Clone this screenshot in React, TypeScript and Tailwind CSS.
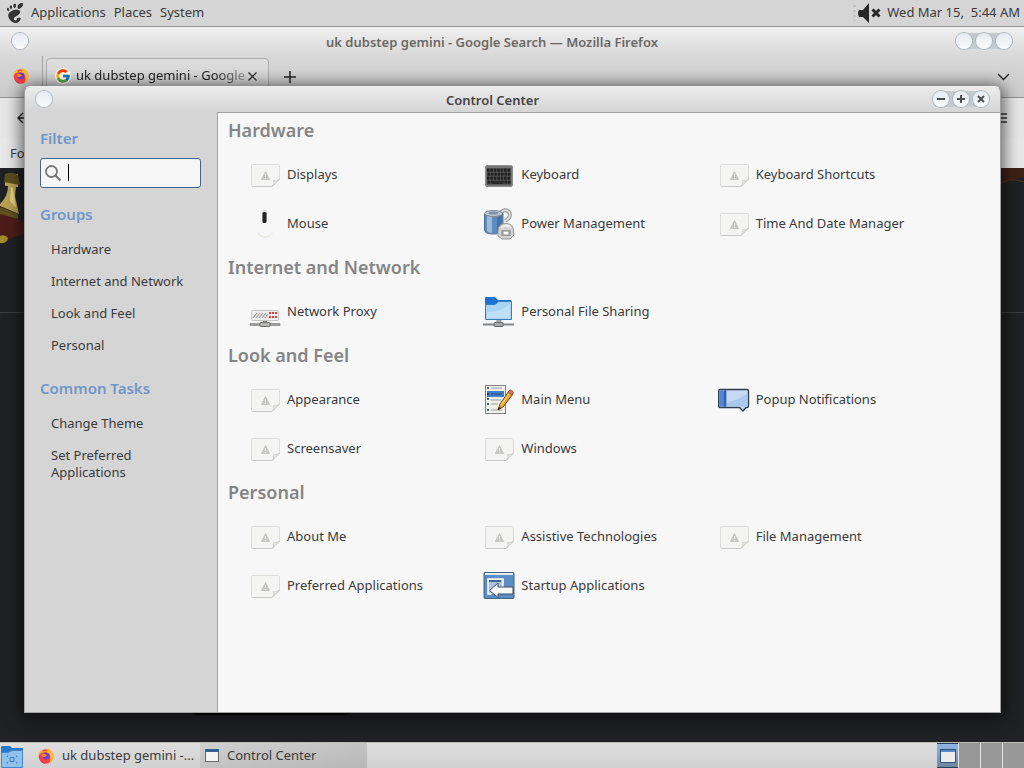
import type { ReactNode } from 'react';
import { FcGoogle } from 'react-icons/fc';
import { SiGnome } from 'react-icons/si';

function BlankIcon() {
  return (
    <svg width="32" height="32" viewBox="0 0 32 32">
      <path d="M3.5 5.5H29.5Q30.5 5.5 30.5 6.5V20L23 27.5H3.5Q2.5 27.5 2.5 26.5V6.5Q2.5 5.5 3.5 5.5Z" fill="#f4f4f2" stroke="#dcdcd9" />
      <path d="M3 27.5H23L30.5 20" fill="none" stroke="#c9c9c6" />
      <path d="M23 27.5Q25.5 25 24.5 21.5Q28 22 30.5 20Z" fill="#e2e2df" stroke="#cfcfcc" strokeWidth=".7" />
      <path d="M16.5 12.5L20.5 20.5H12.5Z" fill="#c6c6c3" stroke="#c6c6c3" strokeLinejoin="round" />
      <path d="M16.5 15V18M16.5 19V20.3" stroke="#f2f2f0" />
    </svg>
  );
}

function KeyboardIcon() {
  const rows = [9.5, 13.5, 17.5, 21.5];
  return (
    <svg width="32" height="32" viewBox="0 0 32 32">
      <rect x="2.5" y="6.5" width="27" height="21" rx="1.5" fill="#777" stroke="#8d8d8d" />
      <rect x="4" y="9" width="24" height="17" fill="#5c5c5c" />
      {rows.map((y, r) => (
        <g key={y} fill="#222">
          {[0, 1, 2, 3, 4, 5, 6].map(c => (
            <rect key={c} x={4 + c * 3.4 + (r % 2) * 0.4} y={y} width="2.7" height="3.2" rx=".5" />
          ))}
        </g>
      ))}
      <rect x="10" y="22" width="10" height="3" fill="#2a2a2a" />
    </svg>
  );
}

function MouseIcon() {
  return (
    <svg width="32" height="32" viewBox="0 0 32 32">
      <path d="M8 23Q9 29 16 30.5Q23 29 24 23Q21 28 16 28Q11 28 8 23Z" fill="#eae9e4" />
      <rect x="13" y="2" width="5" height="13" rx="2.5" fill="#d8d8d8" />
      <rect x="13.5" y="4" width="4" height="11" rx="1.5" fill="#222" />
    </svg>
  );
}

function PowerIcon() {
  return (
    <svg width="32" height="32" viewBox="0 0 32 32">
      <path d="M17 5Q22 0 26 4Q29 9 22 13" fill="none" stroke="#999" strokeWidth="4" />
      <path d="M17 5Q22 0 26 4Q29 9 22 13" fill="none" stroke="#d7d7d7" strokeWidth="2" />
      <path d="M1.5 6V22Q2 26 10 26Q19 26 20 22V6Z" fill="#5f8cbd" stroke="#55708f" />
      <path d="M4 8V23Q6 25 9 25V8Z" fill="#9cbddd" />
      <path d="M14 8V25L19 23V7Z" fill="#4573a8" />
      <ellipse cx="10.5" cy="5.5" rx="9" ry="3" fill="#b8c7d5" stroke="#7d8891" />
      <ellipse cx="10.5" cy="5" rx="5" ry="1.5" fill="#8195a8" />
      <path d="M15 23Q15 15.500 23 15.5Q30.5 15.5 30.5 23L31 27L27 31H19L15 28Z" fill="#d2d2d2" stroke="#969696" />
      <path d="M18 22H28V28H18Z" fill="#aaa" />
      <rect x="20" y="23" width="6" height="4" fill="#fff" stroke="#888" />
      <path d="M18 20Q23 15 28 20" fill="none" stroke="#eee" strokeWidth="2" />
    </svg>
  );
}

function ProxyIcon() {
  return (
    <svg width="32" height="32" viewBox="0 0 32 32">
      <rect x="2.5" y="14.5" width="27" height="10" rx="1" fill="#eee" stroke="#c6c6c6" />
      <path d="M4 22L8 17M7 22L11 17M10 22L14 17M13 22L17 17M16 22L19 18" stroke="#999" strokeWidth="1.2" />
      <path d="M20 16H22V18H20ZM23 16H25V18H23ZM26 16H28V18H26ZM20 20H22V22H20ZM23 20H25V22H23ZM26 20H28V22H26Z" fill="#d33c43" />
      <path d="M14 25H18V27H14Z" fill="#888" />
      <path d="M1 27.5H31V29.5H1Z" fill="#a0a09c" stroke="#777773" strokeWidth=".6" />
      <rect x="11" y="26.5" width="10" height="4" rx="1" fill="#b7b7b3" stroke="#6c6c68" />
    </svg>
  );
}

function SharingIcon() {
  return (
    <svg width="32" height="32" viewBox="0 0 32 32">
      <path d="M2 2Q2 1 3 1H12L15 4H28V12H2Z" fill="#1e71d6" />
      <path d="M2.5 8.5H12L15.5 5.5H28.5V23.5H2.5Z" fill="#a8d3f3" stroke="#347fbd" />
      <path d="M4 16Q16 17 27 8V22H4Z" fill="#c0e0f7" />
      <path d="M14 24H18V28H14Z" fill="#bbb" stroke="#777" strokeWidth=".7" />
      <path d="M0 27.5H31V29.5H0Z" fill="#85878a" />
      <rect x="11" y="26.5" width="9" height="4" rx="1" fill="#aaa" stroke="#62676b" />
    </svg>
  );
}

function MenuIcon() {
  return (
    <svg width="32" height="32" viewBox="0 0 32 32">
      <rect x="2.5" y="1.5" width="20" height="28" fill="#f1f1ec" stroke="#82827e" />
      <rect x="4" y="7" width="17" height="6" fill="#477bc2" />
      <path d="M8 4H19M8 16H18M8 20H15M8 26H19" stroke="#999b98" strokeWidth="1.2" />
      <path d="M8 10H19" stroke="#1e4e91" />
      <path d="M4 4H6M4 10H6M4 15H6M4 20H6M4 26H6" stroke="#1a3153" strokeWidth="1.5" />
      <path d="M15 26L17 20L26 7L30 10L20 23Z" fill="#e6a33b" stroke="#71450f" />
      <path d="M18 21L27 9" stroke="#f8d176" strokeWidth="1.3" />
      <path d="M25 8L27 6Q30 6 30.5 9L29 11Z" fill="#d8776c" stroke="#833e39" strokeWidth=".7" />
      <path d="M15 26L16 23L18 24Z" fill="#222" />
    </svg>
  );
}

function PopupIcon() {
  return (
    <svg width="32" height="32" viewBox="0 0 32 32">
      <path d="M2 5.5H29Q30.500 5.5 30.5 7V22Q30.500 23.500 29 23.5H28L25 27L21.500 23.5H2Q.7 23.500 .7 22V7Q.7 5.5 2 5.5Z" fill="#c6daf2" stroke="#2e3d50" strokeWidth="1.4" />
      <path d="M8 19Q23 15 29.500 9V22.500H8Z" fill="#aac8ea" />
      <rect x="1.5" y="6.5" width="7" height="16" fill="#5384d2" />
      <rect x="6" y="6.5" width="2" height="16" fill="#325db2" />
    </svg>
  );
}

function StartupIcon() {
  return (
    <svg width="32" height="32" viewBox="0 0 32 32">
      <rect x="1" y="2.500" width="30" height="26" rx="1" fill="#5c8dc2" stroke="#45637f" />
      <rect x="2" y="3" width="28" height="2" fill="#e4ecf2" />
      <path d="M5 9H20V16L8 24H5Z" fill="#a9c4e2" stroke="#fff" strokeWidth="1.5" />
      <path d="M6 11H18" stroke="#345a87" strokeWidth="1.8" />
      <path d="M6.5 20.5L15 13V17H30V24H15V27.5Z" fill="#f6f6f4" stroke="#3f5165" />
    </svg>
  );
}

function FirefoxIcon() {
  return (
    <svg width="16" height="16" viewBox="0 0 16 16" className="shrink-0">
      <circle cx="8" cy="8.5" r="7.300" fill="#f5433f" />
      <path d="M1 7Q1 3 4 1.5L5 4Q7 2 9 4Q8 1 10 0Q15 3 15.5 8Q16 13 11 15.3Q14 10 11 6Q8 3 3 5Z" fill="#ffb92e" />
      <path d="M1 8Q2 14 8 15.7Q2 16 1 8Z" fill="#d21f79" />
      <circle cx="8" cy="8" r="3.600" fill="#733ec9" />
      <path d="M4 6Q7 5 9 7.5Q7 9 5 9Q3 8 4 6Z" fill="#ff8b2c" />
    </svg>
  );
}

const groups: { title: string; items: { label: string; icon: ReactNode }[] }[] = [
  {
    title: 'Hardware',
    items: [
      { label: 'Displays', icon: <BlankIcon /> },
      { label: 'Keyboard', icon: <KeyboardIcon /> },
      { label: 'Keyboard Shortcuts', icon: <BlankIcon /> },
      { label: 'Mouse', icon: <MouseIcon /> },
      { label: 'Power Management', icon: <PowerIcon /> },
      { label: 'Time And Date Manager', icon: <BlankIcon /> },
    ],
  },
  {
    title: 'Internet and Network',
    items: [
      { label: 'Network Proxy', icon: <ProxyIcon /> },
      { label: 'Personal File Sharing', icon: <SharingIcon /> },
    ],
  },
  {
    title: 'Look and Feel',
    items: [
      { label: 'Appearance', icon: <BlankIcon /> },
      { label: 'Main Menu', icon: <MenuIcon /> },
      { label: 'Popup Notifications', icon: <PopupIcon /> },
      { label: 'Screensaver', icon: <BlankIcon /> },
      { label: 'Windows', icon: <BlankIcon /> },
    ],
  },
  {
    title: 'Personal',
    items: [
      { label: 'About Me', icon: <BlankIcon /> },
      { label: 'Assistive Technologies', icon: <BlankIcon /> },
      { label: 'File Management', icon: <BlankIcon /> },
      { label: 'Preferred Applications', icon: <BlankIcon /> },
      { label: 'Startup Applications', icon: <StartupIcon /> },
    ],
  },
];

function RoundButton({ label, glyph }: { label: string; glyph?: string }) {
  return (
    <button
      aria-label={label}
      className="flex size-4 items-center justify-center rounded-full bg-linear-to-b from-[#e4ebf1] to-[#fafcfd] ring-1 ring-[#aab5bd]"
    >
      {glyph && (
        <svg width="10" height="10" viewBox="0 0 10 10" fill="none" stroke="#4d5052" strokeWidth="2">
          <path d={glyph} />
        </svg>
      )}
    </button>
  );
}

function SideList({ title, items }: { title: string; items: string[] }) {
  return (
    <div className="mt-4">
      <h2 className="mb-2.5 text-[15px] leading-5 font-semibold text-[#7097c9]">{title}</h2>
      <ul className="pl-[11px]">
        {items.map(item => (
          <li key={item}>
            <button className="pt-[7px] pb-2 text-left leading-[17px]">{item}</button>
          </li>
        ))}
      </ul>
    </div>
  );
}

function TopPanel() {
  return (
    <header className="flex h-[27px] shrink-0 items-center border-b border-[#929292] bg-[#d5d5d5] pr-1 pl-[5px]">
      <SiGnome size={20} color="#333" />
      <nav className="ml-1.5 flex gap-2">
        <button>Applications</button>
        <button>Places</button>
        <button>System</button>
      </nav>
      <div className="ml-auto flex items-center">
        <svg width="30" height="22" viewBox="0 0 30 22" aria-label="Muted">
          <path d="M1.5 3V19" stroke="#bbb" strokeWidth="2" strokeDasharray="2 3" />
          <path d="M6 8H10L16 1V21L10 15H6Q4 11 6 8Z" fill="#282828" />
          <path d="M19.5 7.5L26.5 14.5M26.5 7.5L19.5 14.5" stroke="#282828" strokeWidth="3" />
        </svg>
        <span className="ml-1 whitespace-pre">Wed Mar 15,  5:44 AM</span>
      </div>
    </header>
  );
}

function FirefoxWindow() {
  return (
    <section className="absolute inset-0 flex flex-col overflow-hidden bg-[#202124]">
      <div className="flex h-[29px] shrink-0 items-center bg-linear-to-b from-[#f0f0f0] to-[#d8d8d8] px-3 pb-0.5">
        <RoundButton label="Window menu" />
        <h1 className="flex-1 pt-1 text-center font-semibold text-[#6b6864]">uk dubstep gemini - Google Search — Mozilla Firefox</h1>
        <div className="flex gap-1 rounded-full bg-[#c3cbd0]">
          <RoundButton label="Minimize" />
          <RoundButton label="Maximize" />
          <RoundButton label="Close" />
        </div>
      </div>
      <div className="flex h-[42px] shrink-0 border-b border-[#929292] bg-linear-to-b from-[#d8d8d8] to-[#cbcbcb]">
        <div className="flex w-[43px] justify-center border-r border-[#a5a5a5] pt-3">
          <FirefoxIcon />
        </div>
        <div className="mt-[2px] ml-[3px] flex h-10 w-[223px] items-center rounded-t border border-[#adadad] bg-linear-to-b from-[#dedede] to-[#cfcfcf] pr-[11px] pb-1 pl-2">
          <FcGoogle size={16} className="shrink-0 rounded-full bg-white" />
          <span className="ml-[5px] flex-1 whitespace-nowrap text-[#222] [mask-image:linear-gradient(to_right,black_80%,#0004)]">
            uk dubstep gemini - Google
          </span>
          <button aria-label="Close tab">
            <svg width="9" height="9" viewBox="0 0 9 9" stroke="#222" strokeWidth="1.2">
              <path d="M.5 .5L8.5 8.5M8.5 .5L.5 8.5" />
            </svg>
          </button>
        </div>
        <button aria-label="New tab" className="ml-[14px]">
          <svg width="14" height="14" viewBox="0 0 14 14" stroke="#222" strokeWidth="1.5">
            <path d="M1 7H13M7 1V13" />
          </svg>
        </button>
        <button aria-label="List all tabs" className="mr-3.5 ml-auto">
          <svg width="13" height="8" viewBox="0 0 13 8" fill="none" stroke="#222" strokeWidth="1.4">
            <path d="M1 1L6.5 6.5L12 1" />
          </svg>
        </button>
      </div>
      <div className="flex h-[40px] shrink-0 items-center justify-between bg-[#e6e6e6] pr-[17px] pl-4">
        <svg width="14" height="14" viewBox="0 0 14 14" fill="none" stroke="#222" strokeWidth="1.4">
          <path d="M14 7H2M7 2L2 7L7 12" />
        </svg>
        <svg width="12" height="12" viewBox="0 0 12 12" stroke="#333" strokeWidth="1.5">
          <path d="M0 2H12M0 6H12M0 10H12" />
        </svg>
      </div>
      <div className="h-[30px] shrink-0 bg-[#e8e8e8] pt-1.5 pl-2.5">Fo</div>
      <div className="flex h-[145px] shrink-0 items-start justify-between border-b border-[#3a3d43]">
        <svg width="26" height="88" viewBox="0 0 26 88">
          <path d="M0 44L24 54V66L6 72H0Z" fill="#4c1d1a" />
          <path d="M5 6H18V19H16L15 28L19 46L0 38V36Q8 28 8 18H5Z" fill="#b9a052" />
          <path d="M5 6Q12 3 18 7L20 17L4 14Z" fill="#5b4c20" />
          <path d="M11 19L10 33L16 40L13 20Z" fill="#e2cf85" />
          <path d="M0 39L18 46V51L0 46Z" fill="#5f511f" />
          <path d="M0 68Q5 66 8 70Q7 76 0 75Z" fill="#a58a2b" />
        </svg>
        <svg width="26" height="32" viewBox="0 0 26 32">
          <path d="M0 0H26V10Q12 9 0 20Z" fill="#3d2117" />
          <path d="M0 18Q10 8 26 14" fill="none" stroke="#583020" />
        </svg>
      </div>
      <div className="mt-auto mb-[27px] ml-[180px] h-10 w-[182px] shrink-0 rounded-full bg-black" />
    </section>
  );
}

function ControlCenter() {
  return (
    <section className="absolute top-[59px] right-[23px] bottom-[29px] left-6 flex flex-col rounded-t-md border border-[#a2a2a2] border-t-[#eee] bg-[#d5d5d5] shadow-[0_2px_16px_3px_rgba(0,0,0,0.6)]">
      <div className="flex h-[25px] shrink-0 items-center rounded-t-md bg-linear-to-b from-[#ececec] to-[#d5d5d5] px-[11px] pb-0.5">
        <RoundButton label="Window menu" />
        <h1 className="flex-1 pt-1 text-center font-semibold text-[#444]">Control Center</h1>
        <div className="flex gap-1 rounded-full bg-[#c3cbd0]">
          <RoundButton label="Minimize" glyph="M1 5H9" />
          <RoundButton label="Maximize" glyph="M1 5H9M5 1V9" />
          <RoundButton label="Close" glyph="M2 2L8 8M8 2L2 8" />
        </div>
      </div>
      <div className="flex min-h-0 flex-1">
        <aside className="w-48 shrink-0 pt-4 pr-4 pl-[15px]">
          <label htmlFor="filter" className="mb-2.5 block text-[15px] leading-5 font-semibold text-[#7097c9]">
            Filter
          </label>
          <div className="relative">
            <input
              id="filter"
              type="text"
              className="block h-[30px] w-full rounded-[3px] border border-[#3f658f] bg-[#f6f6f6] pl-7 outline-none"
            />
            <svg className="absolute top-1.5 left-1" width="18" height="18" viewBox="0 0 18 18" fill="none" stroke="#777">
              <circle cx="7.5" cy="7.5" r="5.5" strokeWidth="1.8" />
              <path d="M11.5 11.5L16.5 16.5" strokeWidth="2.2" />
            </svg>
            <span className="absolute top-1.5 left-7 h-[17px] w-px bg-black" />
          </div>
          <SideList title="Groups" items={['Hardware', 'Internet and Network', 'Look and Feel', 'Personal']} />
          <SideList title="Common Tasks" items={['Change Theme', 'Set Preferred Applications']} />
        </aside>
        <main className="flex-1 border-t border-l border-[#a2a2a2] bg-[#f7f7f7] pt-[5px]">
          {groups.map(group => (
            <section key={group.title} className="mb-[7px]">
              <h2 className="mb-2 pl-2.5 text-[18px] leading-6 font-semibold text-[#858585]">{group.title}</h2>
              <div className="mr-12 ml-[31px] grid grid-cols-3">
                {group.items.map(item => (
                  <button key={item.label} className="flex h-[49px] items-center gap-[6px] text-left whitespace-nowrap">
                    <span className="shrink-0">{item.icon}</span>
                    {item.label}
                  </button>
                ))}
              </div>
            </section>
          ))}
        </main>
      </div>
    </section>
  );
}

function BottomPanel() {
  return (
    <footer className="flex h-[26px] shrink-0 items-stretch border-t border-[#bbb] bg-linear-to-b from-[#dedede] to-[#d2d2d2]">
      <button aria-label="Show desktop">
        <svg width="24" height="24" viewBox="0 0 24 24">
          <path d="M1 3Q1 2 2 2H10L12 4H23V12H1Z" fill="#2877cd" />
          <path d="M1.5 8.5H8L12 6.5H22.5V23.5H1.5Z" fill="#8fc2ef" stroke="#4388cc" />
          <path d="M7 13V12H8M7 18V19H8M16 12H17V13M17 18V19H16M10 13.500H14V17.500H10Z" fill="none" stroke="#397bbd" />
        </svg>
      </button>
      <button className="ml-3.5 flex w-[162px] items-center gap-2 whitespace-nowrap">
        <FirefoxIcon />
        <span>uk dubstep gemini -...</span>
      </button>
      <button className="flex w-[167px] items-center gap-2 bg-linear-to-br from-[#d0d0d0] to-[#b7b7b7] pl-[5px]">
        <svg width="14" height="13" viewBox="0 0 14 13">
          <rect x=".5" y=".5" width="13" height="12" fill="#f4f4f4" stroke="#666" />
          <rect x="0" y="0" width="14" height="3" fill="#356094" />
        </svg>
        Control Center
      </button>
      <div className="ml-auto flex gap-px bg-[#e5e5e5]">
        <button aria-label="Workspace 1" className="flex w-[21px] items-center justify-center border-y border-[#26415f] bg-linear-to-b from-[#8db6e8] to-[#70869f]">
          <svg width="16" height="14" viewBox="0 0 16 14">
            <rect x=".5" y=".5" width="15" height="13" fill="#ececec" stroke="#34567d" />
            <rect x="1" y="1" width="14" height="2" fill="#5787c0" />
          </svg>
        </button>
        <button aria-label="Workspace 2" className="w-[21px] bg-[#989898]" />
        <button aria-label="Workspace 3" className="w-[21px] bg-[#989898]" />
        <button aria-label="Workspace 4" className="w-[21px] bg-[#989898]" />
      </div>
    </footer>
  );
}

export default function App() {
  return (
    <div className="flex h-screen flex-col overflow-hidden font-['Noto_Sans',sans-serif] text-[13px] text-[#3a3a3a]">
      <TopPanel />
      <div className="relative min-h-0 flex-1">
        <FirefoxWindow />
        <ControlCenter />
      </div>
      <BottomPanel />
    </div>
  );
}
